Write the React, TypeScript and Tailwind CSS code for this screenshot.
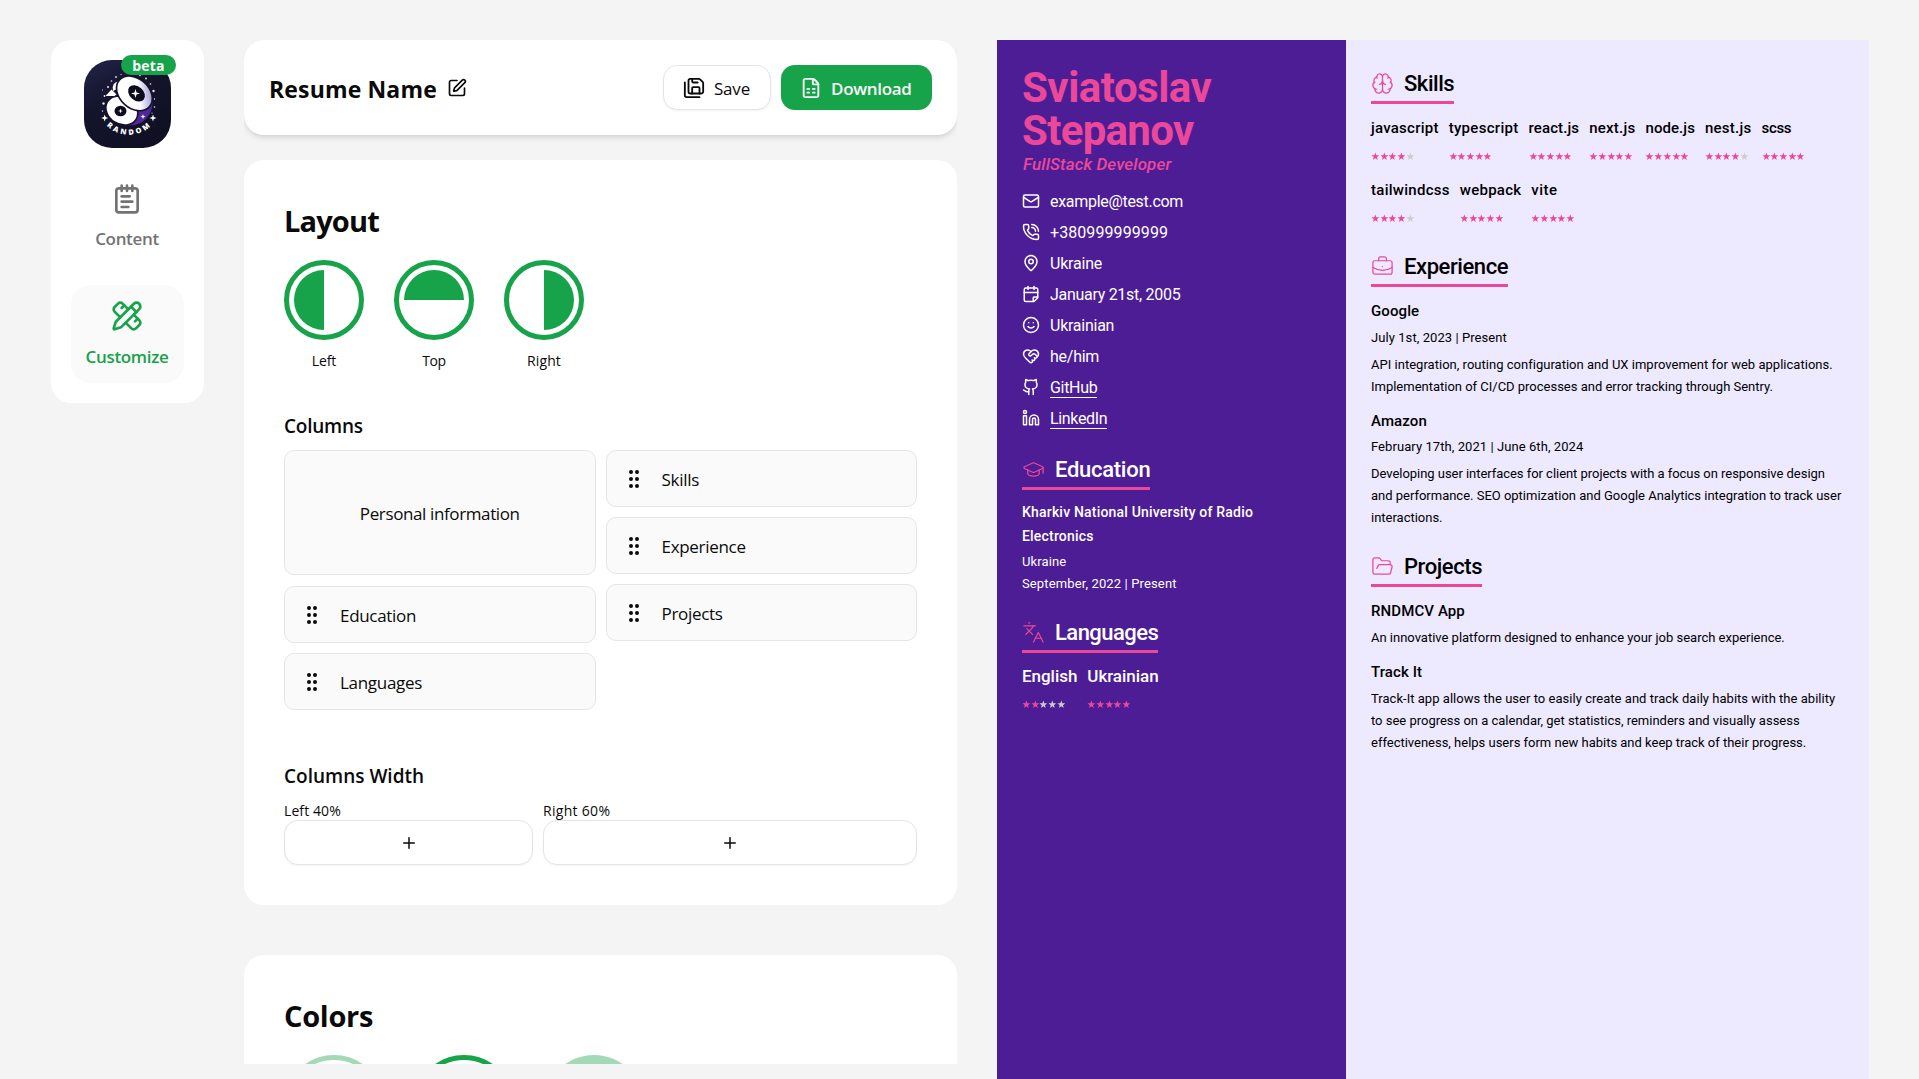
import type { ReactNode } from "react";
import {
  Brain,
  BriefcaseBusiness,
  CalendarFold,
  FileSpreadsheet,
  FolderOpen,
  Github,
  GraduationCap,
  GripVertical,
  HeartHandshake,
  Languages,
  Linkedin,
  Mail,
  MapPin,
  NotepadText,
  PencilRuler,
  PhoneCall,
  Plus,
  SaveAll,
  Smile,
  SquarePen,
  type LucideIcon,
} from "lucide-react";

function Logo() {
  const stars = [
    [24, 27, 1], [27.5, 21, 0.8], [32, 17, 0.9], [37, 14.5, 0.6], [20.5, 36, 0.9], [19.5, 43.5, 1.2],
    [18.5, 51, 0.7], [56, 15.5, 0.8], [62, 18.5, 0.9], [66.5, 24, 0.8], [69.5, 31, 1.2], [70.5, 39, 0.7],
    [70.5, 47, 0.8], [18.5, 30, 0.6], [68, 53, 0.6],
  ];
  return (
    <svg className="h-[88px] w-[87px] rounded-[28px]" viewBox="0 0 87 88">
      <defs>
        <linearGradient id="night" x1="0" y1="0" x2="0.6" y2="1">
          <stop offset="0" stopColor="#23234a" />
          <stop offset="0.45" stopColor="#14142c" />
          <stop offset="1" stopColor="#101024" />
        </linearGradient>
        <linearGradient id="shell" gradientUnits="userSpaceOnUse" x1="46" y1="40" x2="62" y2="22">
          <stop offset="0.5" stopColor="#ffffff" />
          <stop offset="1" stopColor="#aaa6d8" />
        </linearGradient>
        <path id="ring" d="M18.6 60.5A31.6 31.6 0 0 0 71.4 60.5" />
      </defs>
      <rect width="87" height="88" fill="url(#night)" />
      <circle cx="46" cy="43" r="22.5" fill="#4f2899" />
      <circle cx="42" cy="37" r="19" fill="#1a1538" />
      <path d="M21.500 36l6-6.500 5 5-2 1.500z" fill="#fff" />
      <path d="M29 31q-2-9 7-10l-3 8z" fill="#fff" />
      <ellipse cx="37.8" cy="50.6" rx="17.6" ry="14.200" transform="rotate(32 37.8 50.6)" fill="#15122c" />
      <ellipse cx="37.8" cy="50.6" rx="16" ry="12.700" transform="rotate(32 37.8 50.6)" fill="#fff" />
      <ellipse cx="50.4" cy="33.4" rx="21" ry="15.500" transform="rotate(42 50.4 33.4)" fill="#15122c" />
      <ellipse cx="50.4" cy="33.4" rx="19.3" ry="13.900" transform="rotate(42 50.4 33.4)" fill="url(#shell)" />
      <ellipse cx="52.5" cy="33.4" rx="9.6" ry="6.800" transform="rotate(42 52.5 33.4)" fill="#0d0c1c" />
      <ellipse cx="36.5" cy="51" rx="6" ry="5.2" fill="#0d0c1c" />
      <path d="M51.500 29l1 3.500 3.500 1-3.500 1-1 3.500-1-3.500-3.500-1 3.500-1z" fill="#fff" />
      <path d="M36.500 48.500l.6 1.900 1.900.6-1.900.6-.6 1.900-.6-1.900-1.900-.6 1.900-.6z" fill="#fff" />
      <path d="M59 54l.7 2 2 .6-2 .7-.7 2-.7-2-2-.7 2-.6z" fill="#fff" />
      {stars.map(([x, y, r]) => (
        <circle key={`${x}-${y}`} cx={x} cy={y} r={r} fill="#e4e2f5" />
      ))}
      <path d="M20.700 54.500l.9 2.600 2.600.9-2.600.9-.9 2.600-.9-2.600-2.600-.9 2.600-.9z" fill="#fff" />
      <path d="M69 54.500l.9 2.600 2.600.9-2.600.9-.9 2.600-.9-2.600-2.600-.9 2.600-.9z" fill="#fff" />
      <text fill="#fff" fontFamily="Open Sans, sans-serif" fontSize="7.4" fontWeight="800" letterSpacing="2.6" textAnchor="middle">
        <textPath href="#ring" startOffset="51%">RANDOM</textPath>
      </text>
    </svg>
  );
}

function NavItem({ icon: Icon, label, active }: { icon: LucideIcon; label: string; active?: boolean }) {
  return (
    <a
      className={`flex w-[113px] flex-col items-center gap-3 rounded-[20px] py-[15px] ${
        active ? "bg-[#fafafa] text-[#16a34a]" : "text-[#737373]"
      }`}
    >
      <Icon size={32} className="mr-px" />
      <span className={`text-[17px] leading-6 font-semibold tracking-[-0.34px] ${active ? "pt-px -mb-px" : ""}`}>
        {label}
      </span>
    </a>
  );
}

function Sidebar() {
  return (
    <aside className="flex h-[363px] w-[153px] flex-col items-center rounded-[20px] bg-white pt-5">
      <div className="relative">
        <Logo />
        <span className="absolute -top-[5px] left-[37px] h-5 w-[55px] rounded-full bg-[#16a34a] text-center text-[14px] leading-[21px] font-bold tracking-[0.2px] text-white">
          beta
        </span>
      </div>
      <nav className="mt-5 -ml-px flex flex-col gap-[19px]">
        <NavItem icon={NotepadText} label="Content" />
        <NavItem icon={PencilRuler} label="Customize" active />
      </nav>
    </aside>
  );
}

function Header() {
  return (
    <header className="relative z-10 flex h-[95px] shrink-0 items-center justify-between rounded-[20px] bg-white px-[25px] shadow-md">
      <div className="flex items-center gap-2.5">
        <h1 className="pt-0.5 text-[23px] leading-8 font-bold tracking-[0.15px]">Resume Name</h1>
        <SquarePen size={20} />
      </div>
      <div className="flex gap-2.5">
        <button className="flex h-[45px] w-[108px] items-center gap-[9px] rounded-[14px] border border-[#e5e5e5] bg-white pl-[19px] text-[17px] tracking-[-0.2px] shadow-xs">
          <SaveAll size={22} />
          <span className="pt-0.5">Save</span>
        </button>
        <button className="flex h-[45px] w-[151px] items-center gap-2 rounded-[14px] bg-[#16a34a] pl-[19px] text-[17px] font-semibold tracking-[-0.3px] text-[#fafafa] shadow-xs">
          <FileSpreadsheet size={22} />
          <span className="pt-0.5 pl-px">Download</span>
        </button>
      </div>
    </header>
  );
}

function LayoutOption({ label, half, tracking }: { label: string; half: string; tracking: string }) {
  return (
    <div className="flex w-20 flex-col items-center">
      <div className="size-20 rounded-full border-5 border-[#16a34a] p-[5px]">
        <div className="size-[60px] overflow-hidden rounded-full">
          <div className={`bg-[#16a34a] ${half}`} />
        </div>
      </div>
      <span className={`mt-2.5 text-[14px] leading-[21px] ${tracking}`}>{label}</span>
    </div>
  );
}

function DragItem({ label }: { label: string }) {
  return (
    <div className="flex h-[57px] items-center gap-4 rounded-[10px] border border-[#e5e5e5] bg-[#fafafa] pl-[15px]">
      <GripVertical size={24} />
      <span className="pt-0.5 text-[17px] tracking-[-0.3px]">{label}</span>
    </div>
  );
}

function WidthControl({ label, width, tracking }: { label: string; width: string; tracking: string }) {
  return (
    <div className={width}>
      <div className={`h-[19px] text-[14px] leading-[19px] ${tracking}`}>{label}</div>
      <button className="flex h-[45px] w-full items-center justify-center rounded-[14px] border border-[#e5e5e5] bg-white shadow-xs">
        <Plus size={18} />
      </button>
    </div>
  );
}

function Editor() {
  return (
    <main className="flex h-[1024px] w-[713px] flex-col overflow-hidden">
      <Header />
      <section className="mt-[25px] h-[745px] shrink-0 rounded-[20px] bg-white p-10">
        <h2 className="text-[29px] leading-[42px] font-bold tracking-[-0.85px]">Layout</h2>
        <div className="mt-[18px] flex gap-[30px]">
          <LayoutOption label="Left" half="h-full w-1/2" tracking="tracking-[-0.1px]" />
          <LayoutOption label="Top" half="h-1/2 w-full" tracking="tracking-[-0.4px]" />
          <LayoutOption label="Right" half="ml-auto h-full w-1/2" tracking="tracking-[0.1px]" />
        </div>
        <h3 className="mt-[41px] text-[19px] leading-7 font-semibold tracking-[-0.25px]">Columns</h3>
        <div className="mt-2.5 grid grid-cols-2 gap-2.5">
          <div className="flex flex-col gap-2.5">
            <div className="mb-px flex h-[125px] items-center justify-center rounded-[10px] border border-[#e5e5e5] bg-[#fafafa] pt-0.5 text-[17px] tracking-[-0.38px]">
              Personal information
            </div>
            <DragItem label="Education" />
            <DragItem label="Languages" />
          </div>
          <div className="flex flex-col gap-2.5">
            <DragItem label="Skills" />
            <DragItem label="Experience" />
            <DragItem label="Projects" />
          </div>
        </div>
        <h3 className="mt-[52px] text-[19px] leading-7 font-semibold">Columns Width</h3>
        <div className="mt-[11px] flex gap-2.5">
          <WidthControl label="Left 40%" width="w-[249px]" tracking="tracking-[0.1px]" />
          <WidthControl label="Right 60%" width="w-[374px]" tracking="tracking-[0.3px]" />
        </div>
      </section>
      <section className="mt-[50px] shrink-0 rounded-[20px] bg-white p-10">
        <h2 className="text-[29px] leading-[42px] font-bold tracking-[-0.3px]">Colors</h2>
        <div className="mt-[18px] flex gap-[30px]">
          <div className="size-[100px] rounded-full border-5 border-[#a2dab7]" />
          <div className="size-[100px] rounded-full border-5 border-[#16a34a]" />
          <div className="size-[100px] rounded-full bg-[#a2dab7]" />
        </div>
      </section>
    </main>
  );
}

function Rating({ value }: { value: number }) {
  return (
    <div className="flex">
      {[1, 2, 3, 4, 5].map((n) => (
        <svg
          key={n}
          viewBox="0 0 24 24"
          className={`size-[8.7px] ${n <= value ? "fill-[#ec4899]" : "fill-[#cccccc]"}`}
        >
          <path d="M12 1.500l2.800 7.400 7.900.4-6.200 4.900 2.100 7.700L12 17.500l-6.600 4.400 2.100-7.700L1.300 9.300l7.900-.4z" />
        </svg>
      ))}
    </div>
  );
}

function SectionTitle({
  icon: Icon,
  spacing,
  children,
}: {
  icon: LucideIcon;
  spacing: string;
  children: ReactNode;
}) {
  return (
    <h2
      className={`flex w-fit items-center gap-2.5 border-b-3 border-[#ec4899] pb-0.5 text-[22px] leading-[31px] font-medium ${spacing}`}
    >
      <Icon size={23} strokeWidth={1.3} className="text-[#ec4899]" />
      {children}
    </h2>
  );
}

const contacts: { icon: LucideIcon; text: string; tracking: string; link?: boolean }[] = [
  { icon: Mail, text: "example@test.com", tracking: "tracking-[-0.3px]" },
  { icon: PhoneCall, text: "+380999999999", tracking: "tracking-[0.08px]" },
  { icon: MapPin, text: "Ukraine", tracking: "tracking-[-0.2px]" },
  { icon: CalendarFold, text: "January 21st, 2005", tracking: "tracking-[-0.29px]" },
  { icon: Smile, text: "Ukrainian", tracking: "tracking-[-0.25px]" },
  { icon: HeartHandshake, text: "he/him", tracking: "tracking-[-0.25px]" },
  { icon: Github, text: "GitHub", tracking: "tracking-[-0.3px]", link: true },
  { icon: Linkedin, text: "LinkedIn", tracking: "tracking-[-0.35px]", link: true },
];

const skills = [
  { name: "javascript", value: 4, tracking: "tracking-[0.24px]" },
  { name: "typescript", value: 5, tracking: "tracking-[0.3px]" },
  { name: "react.js", value: 5, tracking: "tracking-[0.1px]" },
  { name: "next.js", value: 5, tracking: "tracking-[0.25px]" },
  { name: "node.js", value: 5, tracking: "tracking-[0.07px]" },
  { name: "nest.js", value: 4, tracking: "tracking-[0.25px]" },
  { name: "scss", value: 5, tracking: "tracking-[-0.3px]" },
  { name: "tailwindcss", value: 4, tracking: "tracking-[0.28px]" },
  { name: "webpack", value: 5, tracking: "tracking-[0.25px]" },
  { name: "vite", value: 5, tracking: "tracking-[0.43px]" },
];

function Entry({ title, date, className, children }: { title: string; date?: string; className: string; children: ReactNode }) {
  return (
    <article className={className}>
      <h3 className="text-[15px] leading-6 font-medium tracking-[0.1px]">{title}</h3>
      {date && <p className="mt-[3.5px] mb-[5px] text-[13px] leading-[22px] tracking-[0.07px]">{date}</p>}
      <div className={`text-[13px] leading-[22px] tracking-[-0.01px] whitespace-nowrap ${date ? "" : "mt-1 -mb-[0.5px]"}`}>
        {children}
      </div>
    </article>
  );
}

function Resume() {
  return (
    <div className="flex h-[1039px] font-[Roboto,sans-serif]">
      <div className="w-[349px] bg-[#4c1d95] pt-[26px] pl-[25px] text-white">
        <h1 className="text-[42px] leading-[43px] font-bold text-[#ec4899]">
          <span className="block tracking-[-0.5px]">Sviatoslav</span>
          <span className="block tracking-[-0.7px]">Stepanov</span>
        </h1>
        <p className="mt-px pl-px text-[17px] leading-[22px] font-medium tracking-[0.12px] text-[#ec4899] italic">
          FullStack Developer
        </p>
        <ul className="mt-[10.5px] text-[16px]">
          {contacts.map(({ icon: Icon, text, tracking, link }) => (
            <li key={text} className="flex h-[31px] items-center gap-2.5">
              <Icon size={18} />
              <span className={`leading-[19px] ${tracking} ${link ? "mt-px border-b border-white" : ""}`}>{text}</span>
            </li>
          ))}
        </ul>
        <SectionTitle icon={GraduationCap} spacing="mt-[20.5px] tracking-[-0.28px]">
          Education
        </SectionTitle>
        <p className="mt-2.5 text-[14px] leading-6 font-medium tracking-[0.19px]">
          Kharkiv National University of Radio
          <br />
          Electronics
        </p>
        <p className="mt-[2.5px] text-[13px] leading-[22px] tracking-[0.13px]">
          Ukraine
          <br />
          September, 2022 | Present
        </p>
        <SectionTitle icon={Languages} spacing="mt-[22.5px] tracking-[-0.55px]">
          Languages
        </SectionTitle>
        <div className="mt-2.5 flex gap-2.5 text-[17px] leading-[26px] font-medium tracking-[-0.04px]">
          <div className="flex flex-col gap-[11px]">
            English
            <Rating value={2} />
          </div>
          <div className="flex flex-col gap-[11px]">
            Ukrainian
            <Rating value={5} />
          </div>
        </div>
      </div>
      <div className="w-[523px] bg-[#ede9fe] pt-7 pl-[25px] text-black">
        <SectionTitle icon={Brain} spacing="tracking-[-0.45px]">
          Skills
        </SectionTitle>
        <div className="mt-3 flex w-[460px] flex-wrap gap-2.5 text-[15px] leading-6 font-medium">
          {skills.map(({ name, value, tracking }) => (
            <div key={name} className="flex h-[52px] flex-col gap-3">
              <span className={tracking}>{name}</span>
              <Rating value={value} />
            </div>
          ))}
        </div>
        <SectionTitle icon={BriefcaseBusiness} spacing="mt-[21px] tracking-[-0.42px]">
          Experience
        </SectionTitle>
        <Entry title="Google" date="July 1st, 2023 | Present" className="mt-3">
          <p className="tracking-[0.02px]">
            API integration, routing configuration and UX improvement for web applications.
          </p>
          Implementation of CI/CD processes and error tracking through Sentry.
        </Entry>
        <Entry title="Amazon" date="February 17th, 2021 | June 6th, 2024" className="mt-[11px]">
          <p className="tracking-[-0.04px]">
            Developing user interfaces for client projects with a focus on responsive design
          </p>
          and performance. SEO optimization and Google Analytics integration to track user
          <br />
          interactions.
        </Entry>
        <SectionTitle icon={FolderOpen} spacing="mt-[21.5px] tracking-[-0.42px]">
          Projects
        </SectionTitle>
        <Entry title="RNDMCV App" className="mt-3">
          An innovative platform designed to enhance your job search experience.
        </Entry>
        <Entry title="Track It" className="mt-[11.5px]">
          <p className="tracking-[0.03px]">
            Track-It app allows the user to easily create and track daily habits with the ability
          </p>
          to see progress on a calendar, get statistics, reminders and visually assess
          <br />
          effectiveness, helps users form new habits and keep track of their progress.
        </Entry>
      </div>
    </div>
  );
}

export default function App() {
  return (
    <div className="flex h-screen items-start gap-10 overflow-hidden bg-[#f4f4f4] pt-10 pl-[51px] font-['Open_Sans',sans-serif] text-[#0a0a0a]">
      <Sidebar />
      <Editor />
      <Resume />
    </div>
  );
}
